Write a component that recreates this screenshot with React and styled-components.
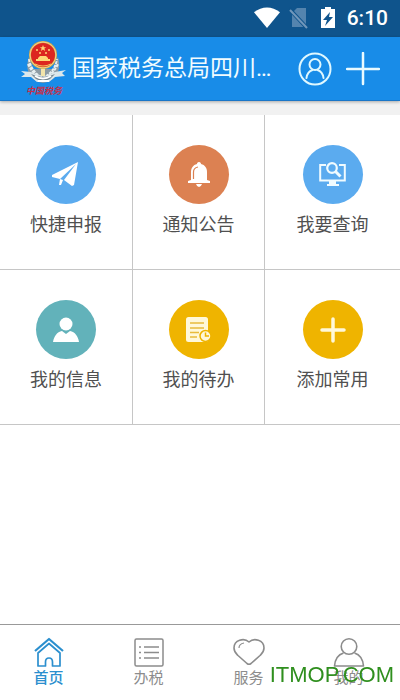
import React from 'react';
import styled, { createGlobalStyle } from 'styled-components';

const GlobalStyle = createGlobalStyle`
  * {
    box-sizing: border-box;
  }

  body {
    margin: 0;
    background: #ffffff;
    font-family: Roboto, 'Noto Sans CJK SC', sans-serif;
  }

  button {
    border: 0;
    padding: 0;
    background: none;
    font: inherit;
    cursor: pointer;
  }

  svg {
    display: block;
    flex: none;
  }
`;

const Screen = styled.div`
  display: flex;
  flex-direction: column;
  min-height: 100vh;
`;

const StatusBar = styled.div`
  display: flex;
  align-items: center;
  justify-content: flex-end;
  gap: 12px;
  height: 37px;
  padding: 0 12px 1px;
  background: #0f548c;
`;

const SignalIcons = styled.div`
  display: flex;
  align-items: center;
  gap: 8px;
`;

const Clock = styled.span`
  color: #ffffff;
  font-size: 21px;
  font-weight: 500;
  line-height: 24px;
`;

const Header = styled.header`
  position: relative;
  display: flex;
  align-items: center;
  height: 64px;
  padding: 0 20px;
  background: #188ce8;
  border-bottom: 1px solid #1976c8;
  box-shadow: 0 1px 3px rgba(0, 0, 0, 0.3);
`;

const Title = styled.h1`
  flex: 1;
  margin: 0 0 0 4px;
  color: #f2fcff;
  font-size: 23px;
  font-weight: 400;
  line-height: 32px;
  white-space: nowrap;
`;

const HeaderActions = styled.div`
  display: flex;
  gap: 14px;
`;

const Main = styled.main`
  flex: 1;
`;

const Gap = styled.div`
  height: 14px;
  background: #f1f1f1;
`;

const Grid = styled.div`
  display: grid;
  grid-template-columns: 133fr 132fr 135fr;
`;

const Tile = styled.button`
  display: flex;
  flex-direction: column;
  align-items: center;
  height: 155px;
  border-right: 1px solid #c6c6c6;
  border-bottom: 1px solid #c6c6c6;
  padding-top: 30px;

  &:nth-child(3n) {
    border-right: 0;
  }
`;

const TileIcon = styled.span`
  display: flex;
  align-items: center;
  justify-content: center;
  width: 60px;
  height: 59px;
  border-radius: 50%;
  background: ${props => props.$color};
`;

const TileLabel = styled.span`
  margin-top: 8px;
  color: #505050;
  font-size: 18px;
  line-height: 26px;
`;

const TabBar = styled.nav`
  display: grid;
  grid-template-columns: repeat(4, 1fr);
  height: 76px;
  border-top: 1px solid #999999;
`;

const Tab = styled.button`
  display: flex;
  flex-direction: column;
  align-items: center;
  padding: 12px 3px 0 0;
  color: ${props => (props.$active ? '#2b8fce' : '#8c8c8c')};
`;

const TabLabel = styled.span`
  font-size: 15px;
  line-height: 18px;
  font-weight: ${props => (props.$active ? 500 : 400)};
`;

const Watermark = styled.div`
  position: fixed;
  right: 6px;
  bottom: 13px;
  color: #2f8f1e;
  font-family: 'Liberation Sans', Arial, sans-serif;
  font-size: 22px;
  line-height: 24px;
  pointer-events: none;
`;

const WifiIcon = () => (
  <svg width="28" height="22" viewBox="0 0 28 22">
    <path d="M1 5.2C9-1.2 19-1.2 27 5.2L14 21Z" fill="#fff" />
  </svg>
);

const NoSimIcon = () => (
  <svg width="20" height="22" viewBox="0 0 20 22">
    <path d="M8 1h9v19H3V6Z" fill="#5484ae" />
    <path d="M0 1.5 18 21" stroke="#0f548c" strokeWidth="4" />
    <path d="M1 3 18 21" stroke="#7197ba" strokeWidth="2" />
  </svg>
);

const BatteryIcon = () => (
  <svg width="14" height="22" viewBox="0 0 14 22">
    <path d="M4 0h6v2h4v19H0V2h4Z" fill="#fff" />
    <path d="M9 5 2 13h4l-2 6 8-9H8Z" fill="#0f548c" />
  </svg>
);

const EmblemName = styled.text`
  fill: #c4304a;
  font-family: 'Noto Sans CJK SC', sans-serif;
  font-size: 9px;
  font-style: italic;
  font-weight: 700;
`;

const Emblem = () => (
  <svg width="48" height="58" viewBox="0 0 48 58">
    <path d="M9 17C4 31 11 41 23 43 36 41 42 31 38 17L33 29 13 29Z" fill="#8c9ba4" />
    <path d="M9 19q2 13 14 19 12-6 14-19M8 24q5 11 15 15 10-4 15-15" fill="none" stroke="#e8eff0" strokeWidth="2" strokeDasharray="3 1" />
    <path d="M1 31 11 32 23 37 35 32 46 30 42 33 45 36 35 37 29 42H17L11 37 1 37 5 34Z" fill="#dce7eb" />
    <path d="M11 34q12 6 24 0l-5 5q-7 4-14 0Z" fill="#76868f" />
    <path d="M15 36q8 5 16 0M18 41h11" fill="none" stroke="#fff" strokeWidth="2" />
    <path d="M21 28h4v8h-4Z" fill="#f2e4ab" />
    <circle cx="23" cy="15" r="14" fill="#d7a94c" />
    <circle cx="23" cy="15" r="13" fill="none" stroke="#f1d38a" />
    <circle cx="23" cy="15" r="12" fill="#dc2620" />
    <path d="m23 5 .9 2.2h2.3l-1.8 1.4.7 2.3-2.1-1.4-2.1 1.4.7-2.3-1.8-1.4h2.3Z" fill="#ffd776" />
    <g fill="#ffd776">
      <circle cx="17" cy="10" r="1" />
      <circle cx="29" cy="10" r="1" />
      <circle cx="20" cy="13" r="1" />
      <circle cx="26" cy="13" r="1" />
      <path d="m18 18 2-2h6l2 2v1h2v2H16v-2h2Z" />
    </g>
    <path d="M15 24q8 4 16 0" fill="none" stroke="#f6c35f" />
    <EmblemName x="6" y="54">中国税务</EmblemName>
  </svg>
);

const ProfileIcon = () => (
  <svg width="34" height="34" viewBox="0 0 34 34" fill="none" stroke="#dff8ff" strokeWidth="2">
    <circle cx="17" cy="17" r="15.5" />
    <circle cx="17" cy="12.5" r="5.5" />
    <path d="M8.5 26c.5-4 3-7 6-8m5 0c3 1 5.5 4 6 8" strokeLinecap="round" />
  </svg>
);

const AddIcon = () => (
  <svg width="34" height="34" viewBox="0 0 34 34">
    <path d="M17 1v31M1 17h32" stroke="#e9faff" strokeWidth="2.5" strokeLinecap="round" />
  </svg>
);

const PlaneIcon = () => (
  <svg width="28" height="28" viewBox="0 0 28 28" fill="#fff">
    <path d="M26 1 0 14v2l8 2L24 3 12 19l8 6 2-1Z" />
    <path d="m8 18 3 1-2 5H7Z" />
  </svg>
);

const BellIcon = () => (
  <svg width="28" height="28" viewBox="0 0 28 28">
    <path d="M14 1c1.5 0 2 1 2 2 4 1 6 4 6 8v8l3 1v2H3v-2l3-1v-8c0-4 2-7 6-8 0-1 .5-2 2-2Z" fill="#fff" />
    <path d="M8.5 18v-7q0-4 4.5-5" fill="none" stroke="#dc8152" strokeWidth="1.2" />
    <path d="M11 23h6q-1 3-3 3t-3-3Z" fill="#fff" />
  </svg>
);

const QueryIcon = () => (
  <svg width="28" height="28" viewBox="0 0 28 28" fill="none" stroke="#f0fbff">
    <path d="M7 4H1.2v15.5h24.6V4H20" strokeWidth="2" />
    <path d="M10 20h7v3h3v2H8v-2h2Z" fill="#f0fbff" stroke="none" />
    <circle cx="13" cy="7" r="4.8" strokeWidth="2.2" />
    <path d="m16.5 10.5 5 5" strokeWidth="3" />
  </svg>
);

const PersonIcon = () => (
  <svg width="28" height="28" viewBox="0 0 28 28" fill="#fff">
    <circle cx="14" cy="8" r="6.5" />
    <path d="M1 26c1-6 4-10 9-11l4 3 4-3c5 1 8 5 9 11Z" />
  </svg>
);

const TodoIcon = () => (
  <svg width="28" height="28" viewBox="0 0 28 28">
    <rect x="1" y="1" width="22" height="25" rx="2.5" fill="#fff8d9" />
    <path d="M5 7h14M5 12h14M5 16.5h9M5 21h7" stroke="#e8bb3c" strokeWidth="1.5" />
    <circle cx="20.5" cy="20" r="5.5" fill="#fff8d9" stroke="#efb400" strokeWidth="1.5" />
    <path d="M20.5 16.5V20H24" fill="none" stroke="#efb400" strokeWidth="1.5" />
  </svg>
);

const PlusIcon = () => (
  <svg width="28" height="28" viewBox="0 0 28 28">
    <path d="M14 3v22M3 14h22" stroke="#fff8d9" strokeWidth="3.5" strokeLinecap="round" />
  </svg>
);

const HomeIcon = () => (
  <svg width="32" height="32" viewBox="0 0 32 32" fill="none" stroke="currentColor" strokeWidth="1.7" strokeLinejoin="round">
    <path d="M2 14 16 2l14 12" strokeWidth="2.2" />
    <path d="M5 16v13h7.5v-4q0-4 3.5-4t3.5 4v4H27V16L16 6.5Z" />
  </svg>
);

const ListIcon = () => (
  <svg width="32" height="32" viewBox="0 0 32 32" fill="none" stroke="currentColor" strokeWidth="1.5">
    <rect x="2" y="2" width="28" height="27" rx="1.5" />
    <path d="M11 10h15M11 15.5h15M11 21h15M6 10h2M6 15.5h2M6 21h2" />
  </svg>
);

const HeartIcon = () => (
  <svg width="32" height="32" viewBox="0 0 32 32" fill="none" stroke="currentColor" strokeWidth="1.6" strokeLinejoin="round">
    <path d="M16 5C11 .5 1 3 1 11c0 4 2.500 6 4 7.500l9 8q2 1.500 4 0l9-8c1.500-1.500 4-3.500 4-7.500 0-8-10-10.500-15-6Z" />
    <path d="M6 11q0-4 5-5" strokeWidth="1.2" />
  </svg>
);

const MineIcon = () => (
  <svg width="32" height="32" viewBox="0 0 32 32" fill="none" stroke="currentColor" strokeWidth="1.6">
    <circle cx="16" cy="9.5" r="7.8" />
    <path d="M10.5 16C4 18 2 23 1.5 29h29C30 23 28 18 21.5 16" strokeLinejoin="round" />
  </svg>
);

const tiles = [
  { label: '快捷申报', color: '#5babef', icon: <PlaneIcon /> },
  { label: '通知公告', color: '#dc8152', icon: <BellIcon /> },
  { label: '我要查询', color: '#5babef', icon: <QueryIcon /> },
  { label: '我的信息', color: '#62b2ba', icon: <PersonIcon /> },
  { label: '我的待办', color: '#efb400', icon: <TodoIcon /> },
  { label: '添加常用', color: '#efb400', icon: <PlusIcon /> },
];

const tabs = [
  { label: '首页', icon: <HomeIcon />, active: true },
  { label: '办税', icon: <ListIcon /> },
  { label: '服务', icon: <HeartIcon /> },
  { label: '我的', icon: <MineIcon /> },
];

const App = () => (
  <Screen>
    <GlobalStyle />
    <StatusBar>
      <SignalIcons>
        <WifiIcon />
        <NoSimIcon />
      </SignalIcons>
      <BatteryIcon />
      <Clock>6:10</Clock>
    </StatusBar>
    <Header>
      <Emblem />
      <Title>国家税务总局四川…</Title>
      <HeaderActions>
        <button aria-label="个人中心">
          <ProfileIcon />
        </button>
        <button aria-label="添加">
          <AddIcon />
        </button>
      </HeaderActions>
    </Header>
    <Main>
      <Gap />
      <Grid>
        {tiles.map(tile => (
          <Tile key={tile.label}>
            <TileIcon $color={tile.color}>{tile.icon}</TileIcon>
            <TileLabel>{tile.label}</TileLabel>
          </Tile>
        ))}
      </Grid>
    </Main>
    <TabBar>
      {tabs.map(tab => (
        <Tab key={tab.label} $active={tab.active}>
          {tab.icon}
          <TabLabel $active={tab.active}>{tab.label}</TabLabel>
        </Tab>
      ))}
    </TabBar>
    <Watermark>ITMOP.COM</Watermark>
  </Screen>
);

export default App;
